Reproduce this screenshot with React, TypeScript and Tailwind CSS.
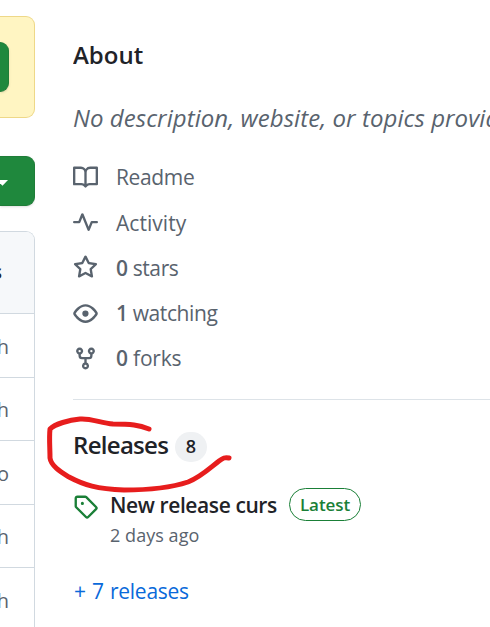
import type { ReactNode } from "react";

const BOOK =
  "M0 1.75A.75.75 0 0 1 .75 1h4.253c1.227 0 2.317.59 3 1.501A3.743 3.743 0 0 1 11.006 1h4.245a.75.75 0 0 1 .75.75v10.5a.75.75 0 0 1-.75.75h-4.507a2.25 2.25 0 0 0-1.591.659l-.622.621a.75.75 0 0 1-1.06 0l-.622-.621A2.25 2.25 0 0 0 5.258 13H.75a.75.75 0 0 1-.75-.75Zm7.251 10.324.004-5.073-.002-2.253A2.25 2.25 0 0 0 5.003 2.5H1.5v9h3.757a3.75 3.75 0 0 1 1.994.574ZM8.755 4.75l-.004 7.322a3.752 3.752 0 0 1 1.992-.572H14.5v-9h-3.495a2.25 2.25 0 0 0-2.25 2.25Z";
const PULSE =
  "M6 2c.306 0 .582.187.696.471L10 10.731l1.304-3.26A.751.751 0 0 1 12 7h3.25a.75.75 0 0 1 0 1.5h-2.742l-1.812 4.528a.751.751 0 0 1-1.392 0L6 4.77 4.696 8.03A.75.75 0 0 1 4 8.5H.75a.75.75 0 0 1 0-1.5h2.742l1.812-4.529A.751.751 0 0 1 6 2Z";
const STAR =
  "M8 .25a.75.75 0 0 1 .673.418l1.882 3.815 4.21.612a.75.75 0 0 1 .416 1.279l-3.046 2.97.719 4.192a.751.751 0 0 1-1.088.791L8 12.347l-3.766 1.98a.75.75 0 0 1-1.088-.79l.72-4.194L.818 6.374a.75.75 0 0 1 .416-1.28l4.21-.611L7.327.668A.75.75 0 0 1 8 .25Zm0 2.445L6.615 5.5a.75.75 0 0 1-.564.41l-3.097.45 2.24 2.184a.75.75 0 0 1 .216.664l-.528 3.084 2.769-1.456a.75.75 0 0 1 .698 0l2.77 1.456-.53-3.084a.75.75 0 0 1 .216-.664l2.24-2.183-3.096-.45a.75.75 0 0 1-.564-.41L8 2.694Z";
const EYE =
  "M8 2c1.981 0 3.671.992 4.933 2.078 1.27 1.091 2.187 2.345 2.637 3.023a1.62 1.62 0 0 1 0 1.798c-.45.678-1.367 1.932-2.637 3.023C11.67 13.008 9.981 14 8 14c-1.981 0-3.671-.992-4.933-2.078C1.797 10.83.88 9.576.43 8.898a1.62 1.62 0 0 1 0-1.798c.45-.677 1.367-1.931 2.637-3.022C4.33 2.992 6.019 2 8 2ZM1.679 7.932a.12.12 0 0 0 0 .136c.411.622 1.241 1.75 2.366 2.717C5.176 11.758 6.527 12.5 8 12.5c1.473 0 2.825-.742 3.955-1.715 1.124-.967 1.954-2.096 2.366-2.717a.12.12 0 0 0 0-.136c-.412-.621-1.242-1.75-2.366-2.717C10.824 4.242 9.473 3.5 8 3.5c-1.473 0-2.825.742-3.955 1.715-1.124.967-1.954 2.096-2.366 2.717ZM8 10a2 2 0 1 1-.001-3.999A2 2 0 0 1 8 10Z";
const FORK =
  "M5 5.372v.878c0 .414.336.75.75.75h4.5a.75.75 0 0 0 .75-.75v-.878a2.25 2.25 0 1 1 1.5 0v.878a2.25 2.25 0 0 1-2.25 2.25h-1.5v2.128a2.251 2.251 0 1 1-1.5 0V8.5h-1.5A2.25 2.25 0 0 1 3.5 6.25v-.878a2.25 2.25 0 1 1 1.5 0ZM5 3.25a.75.75 0 1 0-1.5 0 .75.75 0 0 0 1.5 0Zm6.75.75a.75.75 0 1 0 0-1.5.75.75 0 0 0 0 1.5Zm-3 8.75a.75.75 0 1 0-1.5 0 .75.75 0 0 0 1.5 0Z";
const TAG =
  "M1 7.775V2.75C1 1.784 1.784 1 2.75 1h5.025c.464 0 .91.184 1.238.513l6.25 6.25a1.75 1.75 0 0 1 0 2.474l-5.026 5.026a1.75 1.75 0 0 1-2.474 0l-6.25-6.25A1.752 1.752 0 0 1 1 7.775Zm1.5 0c0 .066.026.13.073.177l6.25 6.25a.25.25 0 0 0 .354 0l5.025-5.025a.25.25 0 0 0 0-.354l-6.25-6.25a.25.25 0 0 0-.177-.073H2.75a.25.25 0 0 0-.25.25ZM6 5a1 1 0 1 1 0 2 1 1 0 0 1 0-2Z";

function Icon({ d, className = "" }: { d: string; className?: string }) {
  return (
    <svg viewBox="0 0 16 16" fill="currentColor" className={`size-[25px] shrink-0 ${className}`}>
      <path d={d} />
    </svg>
  );
}

function Stat({ icon, className = "", children }: { icon: string; className?: string; children: ReactNode }) {
  return (
    <li className="flex h-[45.2px] items-center gap-[18px]">
      <Icon d={icon} />
      <span className={`pt-px ${className}`}>{children}</span>
    </li>
  );
}

function FileColumn() {
  return (
    <div className="flex w-[35px] shrink-0 flex-col overflow-hidden pt-4">
      <div className="flex h-[102px] shrink-0 items-center rounded-r-[9px] border border-l-0 border-[#eed888] bg-[#fff5c2]">
        <div className="h-[50px] w-[9px] rounded-r-[9px] border border-l-0 border-[#1f7d38] bg-[#1f883d] shadow-sm" />
      </div>
      <div className="mt-[38px] flex h-[50px] shrink-0 items-center rounded-r-[9px] border border-l-0 border-[#1f7d38] bg-[#1f883d] shadow-sm">
        <svg viewBox="0 0 8 6" className="mt-[3px] h-[6px] w-2 fill-white">
          <path d="M0 0h8L2.5 5.8 0 3.2Z" />
        </svg>
      </div>
      <div className="mt-[25px] flex h-[420px] shrink-0 flex-col rounded-tr-[9px] border-t border-r border-[#d1d9e0] text-[20px] text-[#59636e]">
        <div className="flex h-[82px] shrink-0 items-center justify-end rounded-tr-[8px] border-b border-[#d1d9e0] bg-[#f6f8fa] pr-8 text-[19px] font-semibold text-[#1f2328]">
          s
        </div>
        {["h", "h", "o", "h", "h"].map((letter, i) => (
          <div
            key={i}
            className="flex h-[63.5px] shrink-0 items-center justify-end border-b border-[#d1d9e0] pt-[3px] pr-[25px]"
          >
            {letter}
          </div>
        ))}
      </div>
    </div>
  );
}

export default function App() {
  return (
    <div className="relative flex h-[627px] w-[490px] overflow-hidden bg-white font-['Open_Sans','Noto_Sans',sans-serif] whitespace-nowrap text-[#59636e]">
      <FileColumn />
      <main className="ml-[38px] flex min-w-0 flex-1 flex-col overflow-hidden pt-[37px]">
        <h2 className="h-9 text-[24px] leading-9 font-semibold text-[#1f2328]">About</h2>
        <p className="mt-[28px] h-[34px] text-[24px] leading-[34px] tracking-[0.06px] italic">
          No description, website, or topics provided.
        </p>
        <ul className="mt-[20px] flex flex-col text-[21px]">
          <Stat icon={BOOK} className="tracking-[-0.35px]">Readme</Stat>
          <Stat icon={PULSE} className="tracking-[0.05px]">Activity</Stat>
          <Stat icon={STAR} className="tracking-[-0.4px]">
            <b className="font-semibold">0</b> stars
          </Stat>
          <Stat icon={EYE} className="tracking-[-0.4px]">
            <b className="font-semibold">1</b> watching
          </Stat>
          <Stat icon={FORK} className="tracking-[-0.2px]">
            <b className="font-semibold">0</b> forks
          </Stat>
        </ul>
        <hr className="mt-[18px] border-[#d1d9e0]/75" />
        <div className="mt-[27px] flex h-9 items-center">
          <h2 className="w-[102px] text-[24px] leading-9 font-semibold tracking-[-0.7px] text-[#1f2328]">
            Releases
          </h2>
          <span className="mt-1 flex h-[30px] w-8 items-center justify-center rounded-full bg-[#eff1f3] text-[18px] font-semibold text-[#1f2328]">
            8
          </span>
        </div>
        <div className="mt-[25px] flex h-[34px] items-center">
          <Icon d={TAG} className="mt-1 text-[#1a7f37]" />
          <span className="ml-3 w-[179px] pt-px text-[21px] font-semibold tracking-[-0.4px] text-[#1f2328]">
            New release curs
          </span>
          <span className="flex h-[33px] w-[72px] items-center justify-center rounded-full border border-[#1a7f37] pb-px text-[17px] font-semibold tracking-[-0.1px] text-[#1a7f37]">
            Latest
          </span>
        </div>
        <p className="ml-[37px] h-[26px] text-[18px] leading-[26px] tracking-[0.05px]">2 days ago</p>
        <a className="mt-[27px] ml-px h-8 text-[21px] leading-8 tracking-[-0.25px] text-[#0969da] [word-spacing:1px]">
          + 7 releases
        </a>
      </main>
      <svg
        viewBox="0 0 490 627"
        className="pointer-events-none absolute inset-0 h-full w-full"
        fill="none"
        stroke="#e71d1d"
        strokeWidth="5"
        strokeLinecap="round"
        strokeLinejoin="round"
      >
        <path d="M149 429C139 425 131 424 113 424C101 423 90 418 80 419C69 420 55 424 50 429C49 438 50 448 50 458C51 466 61 472 69 477C84 485 97 489 124 490C149 490 170 488 188 482C201 477 211 467 219 461C223 458 225 457 229 458" />
      </svg>
    </div>
  );
}
